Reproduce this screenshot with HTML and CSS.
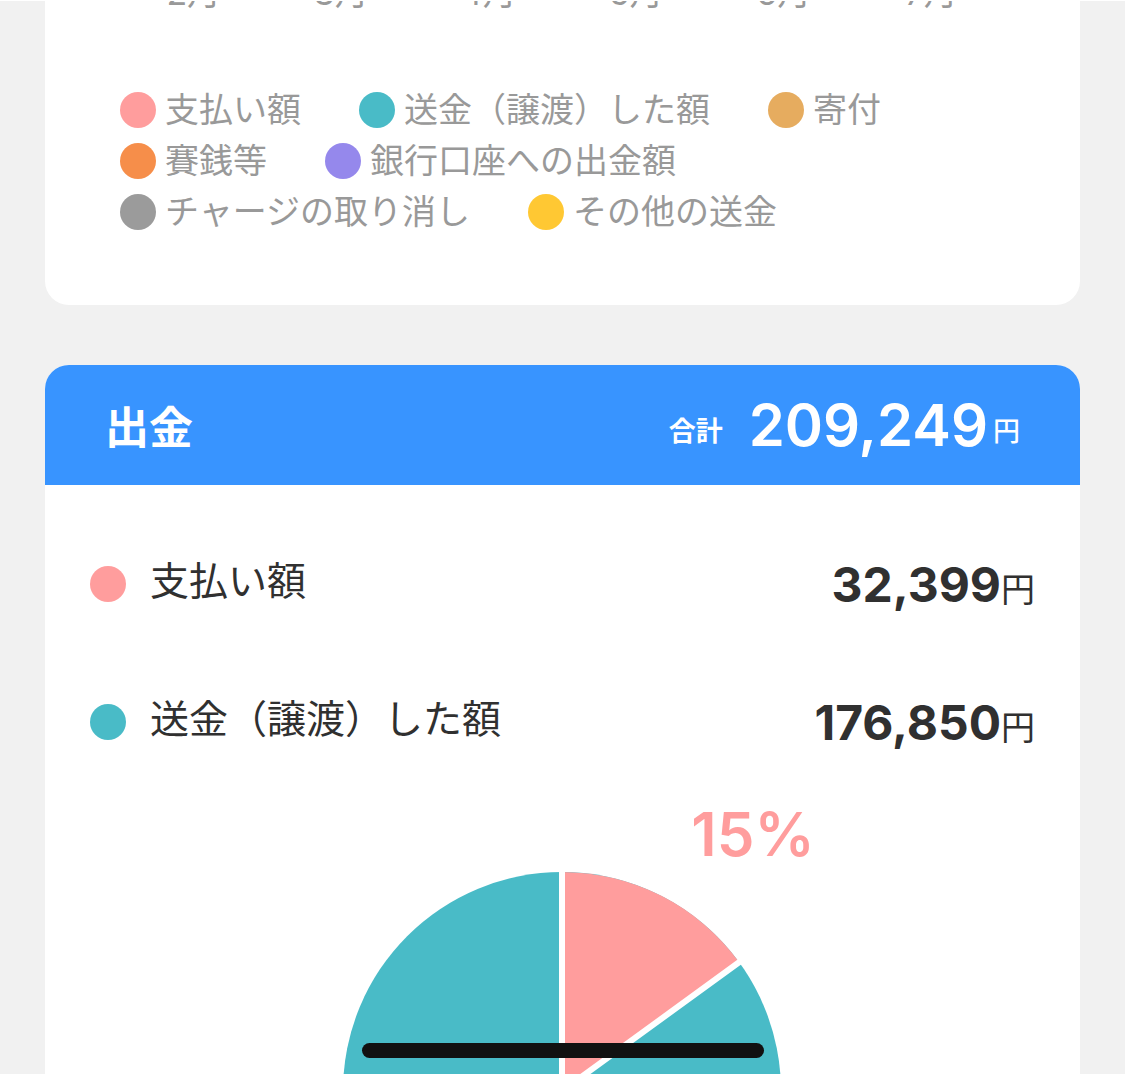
FILE: index.html
```html
<!DOCTYPE html>
<html lang="ja">
<head>
<meta charset="utf-8">
<meta name="viewport" content="width=device-width, initial-scale=1">
<title>出金レポート</title>
<link rel="stylesheet" href="styles.css">
</head>
<body>
<main class="screen">
  <section class="card trend">
    <div class="months">
      <span>2月</span><span>3月</span><span>4月</span><span>5月</span><span>6月</span><span>7月</span>
    </div>
    <ul class="legend">
      <li><i class="dot pink"></i>支払い額</li>
      <li><i class="dot teal"></i>送金（譲渡）した額</li>
      <li><i class="dot sand"></i>寄付</li>
      <li><i class="dot orange"></i>賽銭等</li>
      <li><i class="dot purple"></i>銀行口座への出金額</li>
      <li><i class="dot gray"></i>チャージの取り消し</li>
      <li><i class="dot yellow"></i>その他の送金</li>
    </ul>
  </section>

  <section class="card">
    <header class="summary">
      <h2 class="summary-title">出金</h2>
      <p class="total"><span class="total-label">合計</span><span class="total-value">209,249</span><span class="total-unit">円</span></p>
    </header>
    <ul class="breakdown">
      <li>
        <i class="dot pink"></i>
        <span class="name">支払い額</span>
        <span class="amount"><b>32,399</b>円</span>
      </li>
      <li>
        <i class="dot teal"></i>
        <span class="name">送金（譲渡）した額</span>
        <span class="amount"><b>176,850</b>円</span>
      </li>
    </ul>
    <svg class="pie" viewBox="0 0 620 540" role="img" aria-label="支払い額 15%">
      <circle class="slice-teal" cx="309" cy="300" r="219"/>
      <path class="slice-pink" d="M309 300V81A219 219 0 0 1 486.2 171.3Z"/>
      <path class="divider" d="M309 76V300L490.2 168.3"/>
      <text class="percent" x="500" y="65" text-anchor="middle">15%</text>
    </svg>
  </section>
  <div class="home-indicator"></div>
</main>
</body>
</html>
```
FILE: styles.css
```css
* {
  box-sizing: border-box;
}

body {
  margin: 0;
  background: #f1f1f1;
  color: #303030;
  font-family: Inter, "Noto Sans CJK JP", sans-serif;
}

h2,
p,
ul {
  margin: 0;
  padding: 0;
}

ul {
  list-style: none;
}

.screen {
  position: relative;
  height: 100vh;
  overflow: hidden;
  padding: 0 45px;
  border-top: 1px solid #fff;
  border-bottom: 1px solid #fff;
}

.card {
  overflow: hidden;
  border-radius: 24px;
  background: #fff;
}

.trend {
  margin-bottom: 60px;
  padding: 0 75px 68px;
  border-radius: 0 0 24px 24px;
  color: #999;
  font-size: 34px;
}

.months {
  display: grid;
  grid-template-columns: repeat(6, 1fr);
  align-content: end;
  height: 12px;
  margin-bottom: 71px;
  overflow: hidden;
  line-height: 40px;
  text-align: center;
}

.legend {
  display: flex;
  flex-wrap: wrap;
  column-gap: 58px;
}

.legend li {
  display: flex;
  align-items: center;
  gap: 9px;
  height: 51px;
  line-height: 51px;
  white-space: nowrap;
}

.dot {
  flex: none;
  width: 36px;
  height: 36px;
  border-radius: 50%;
}

.pink { background: #ff9d9d; }
.teal { background: #49bbc7; }
.sand { background: #e6ac5f; }
.orange { background: #f68e4a; }
.purple { background: #9588ec; }
.gray { background: #9b9b9b; }
.yellow { background: #ffc833; }

.summary {
  display: flex;
  align-items: center;
  justify-content: space-between;
  height: 120px;
  padding: 0 60px;
  background: #3894ff;
  color: #fff;
}

.summary-title {
  font-size: 44px;
  font-weight: 700;
}

.total {
  display: flex;
  align-items: center;
  font-size: 27px;
}

.total-label {
  margin-right: 26px;
  padding-top: 8px;
  font-weight: 700;
}

.total-value {
  font-size: 58px;
  font-weight: 600;
  line-height: 72px;
}

.total-unit {
  margin-left: 5px;
  padding-top: 8px;
  font-weight: 500;
}

.breakdown {
  padding: 30px 45px 0;
}

.breakdown li {
  display: flex;
  align-items: center;
  height: 138px;
}

.name {
  margin-left: 24px;
  padding-bottom: 12px;
  font-size: 39px;
}

.amount {
  margin-left: auto;
  font-size: 34px;
}

.amount b {
  font-size: 48px;
}

.pie {
  display: block;
  width: 620px;
  height: 540px;
  margin: 0 auto;
}

.slice-teal { fill: #49bbc7; }
.slice-pink { fill: #ff9d9d; }

.divider {
  fill: none;
  stroke: #fff;
  stroke-width: 6px;
}

.percent {
  fill: #ff9d9d;
  font-size: 60px;
  font-weight: 600;
}

.home-indicator {
  position: absolute;
  bottom: 16px;
  left: 50%;
  width: 402px;
  height: 15px;
  border-radius: 8px;
  background: #111;
  transform: translateX(-50%);
}
```
